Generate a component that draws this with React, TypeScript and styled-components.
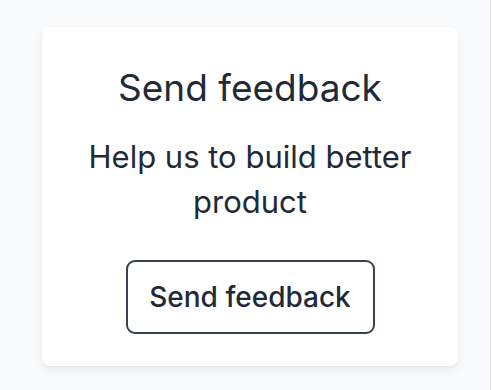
import styled, { createGlobalStyle } from "styled-components";

const GlobalStyle = createGlobalStyle`
  html, body {
    margin: 0;
    padding: 0;
    background: #ffffff;
    font-family: Inter, "Noto Sans", sans-serif;
    color: #1f2937;
  }
`;

const Page = styled.div`
  width: 491px;
  min-height: 390px;
  padding: 27px 0 0 42px;
  box-sizing: border-box;
  background: #f9fafb;
  border-right: 1px solid #e5e7eb;
`;

const Card = styled.div`
  width: 416px;
  height: 339px;
  box-sizing: border-box;
  background: #ffffff;
  border-radius: 8px;
  box-shadow: 0 4px 10px rgba(0, 0, 0, 0.06), 0 1px 3px rgba(0, 0, 0, 0.05);
  display: flex;
  flex-direction: column;
  align-items: center;
  padding: 39px 16px 0;
  text-align: center;
`;

const Title = styled.h2`
  margin: 0;
  font-size: 37px;
  font-weight: 400;
  line-height: 44px;
`;

const Text = styled.p`
  margin: 24px 0 0;
  font-size: 31px;
  line-height: 45px;
  max-width: 360px;
`;

const Button = styled.button`
  margin-top: 36px;
  width: 249px;
  height: 74px;
  box-sizing: border-box;
  background: #ffffff;
  border: 2px solid #374151;
  border-radius: 9px;
  font-family: inherit;
  font-size: 28px;
  font-weight: 500;
  color: #1f2937;
  cursor: pointer;
`;

export default function App() {
  return (
    <>
      <GlobalStyle />
      <Page>
        <Card>
          <Title>Send feedback</Title>
          <Text>Help us to build better product</Text>
          <Button>Send feedback</Button>
        </Card>
      </Page>
    </>
  );
}
